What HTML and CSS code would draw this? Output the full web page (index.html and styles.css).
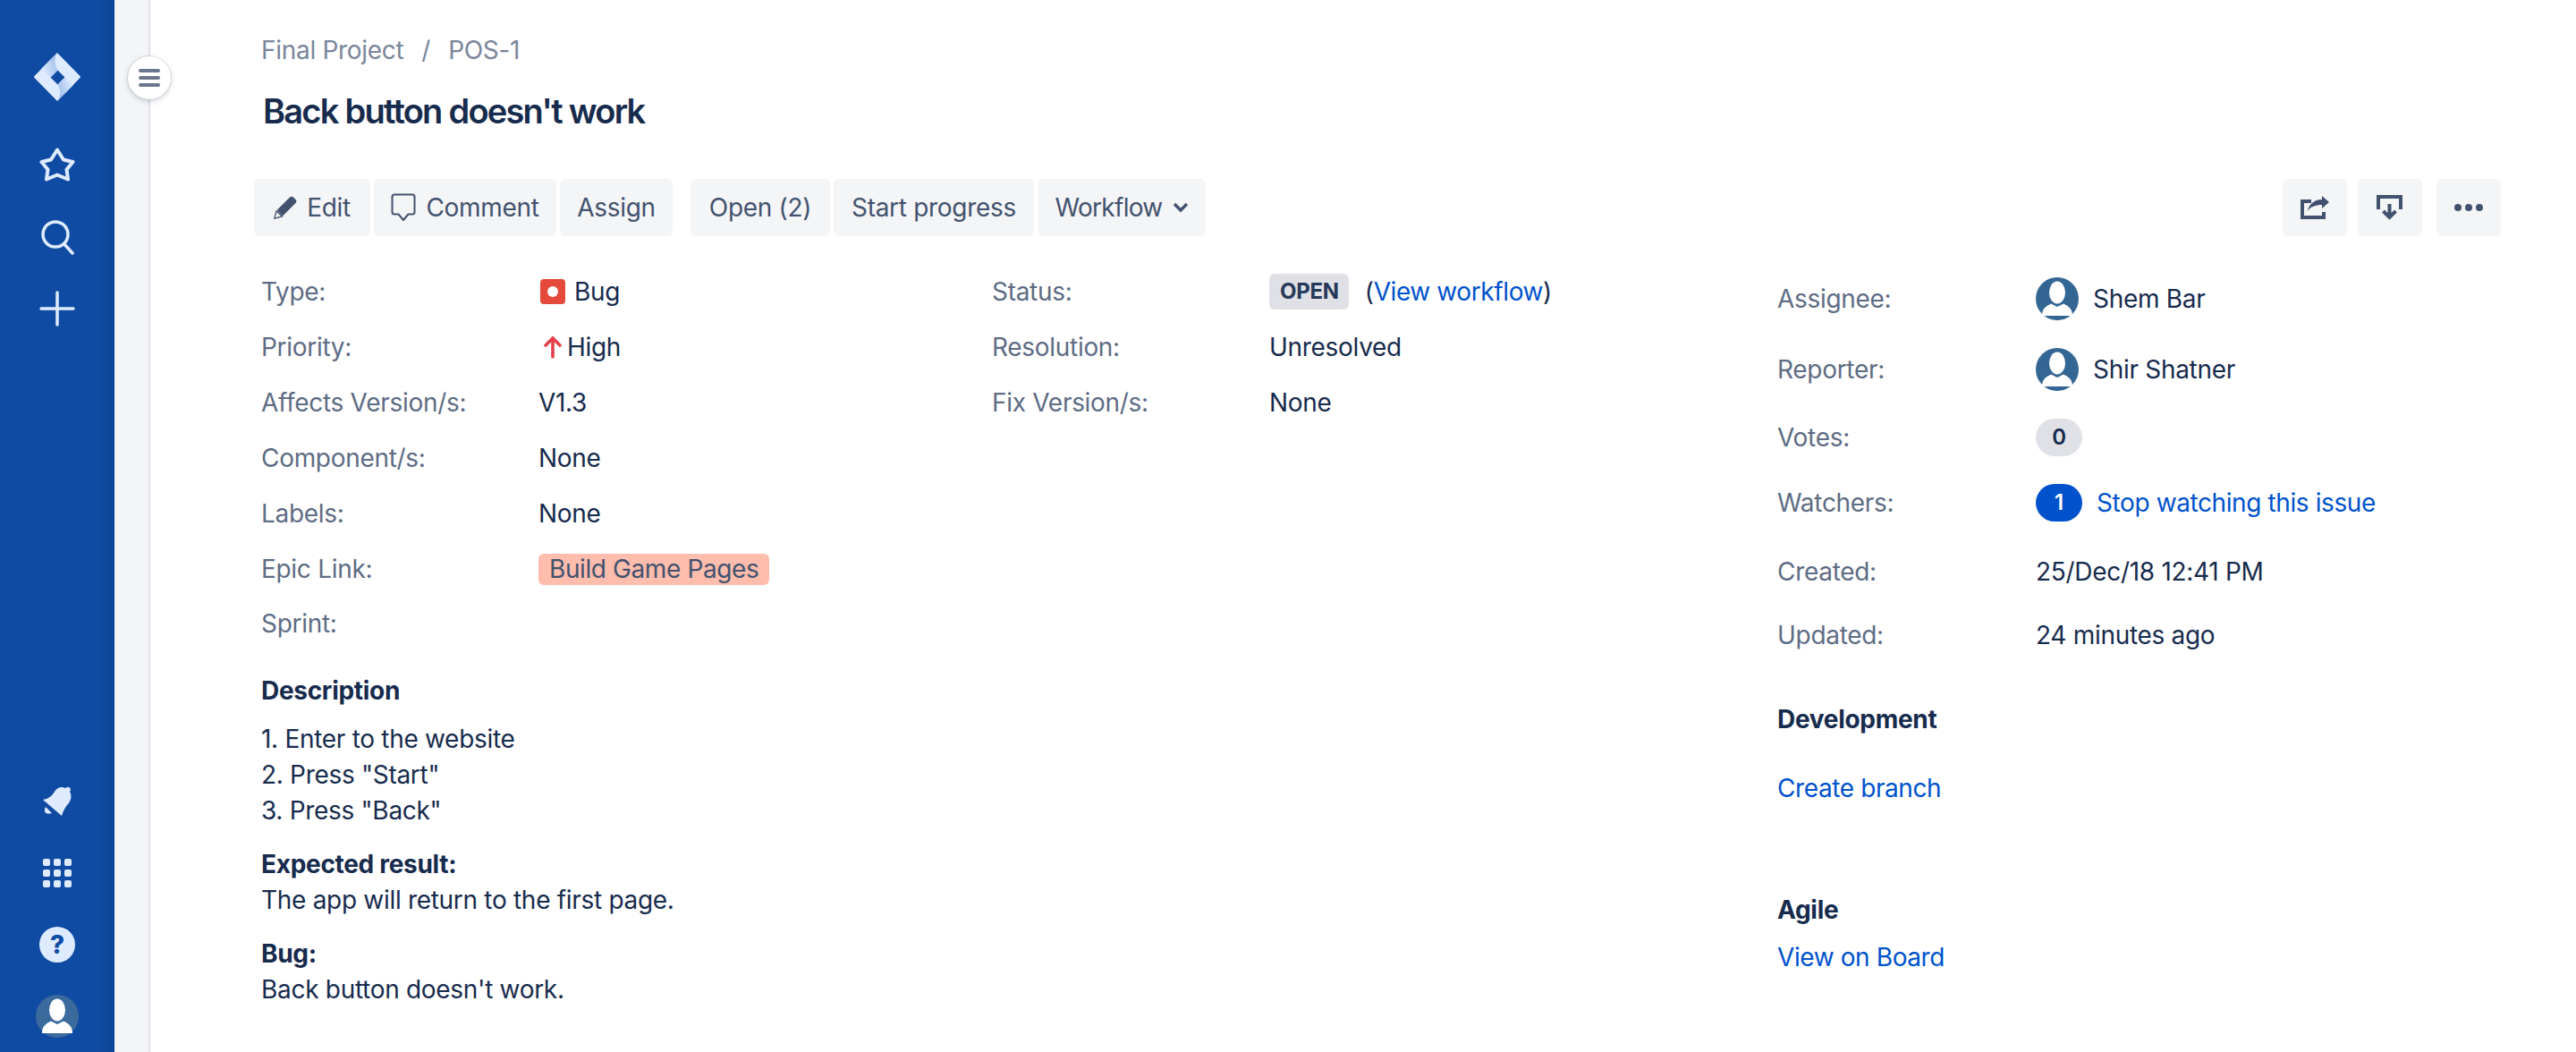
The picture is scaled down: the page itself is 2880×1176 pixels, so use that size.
FILE: index.html
```html
<!DOCTYPE html>
<html lang="en">
<head>
  <meta charset="UTF-8" />
  <title>POS-1 Back button doesn't work</title>
  <link rel="stylesheet" href="styles.css">
</head>
<body>
  <svg class="defs" width="0" height="0">
    <symbol id="avatar" viewBox="0 0 48 48">
      <circle cx="24" cy="24" r="24" fill="currentColor" />
      <ellipse cx="24" cy="17" rx="9" ry="12.5" fill="#fff" />
      <path d="M7 43C7 36 10 33 17 29.5L24 33L31 29.5C38 33 41 36 41 43Z" fill="#fff" />
    </symbol>
  </svg>

  <nav class="sidebar">
    <div class="nav-group">
      <svg class="nav-logo" width="52" height="54" viewBox="0 0 52 54">
        <defs>
          <linearGradient id="fold-top" gradientUnits="userSpaceOnUse" x1="8" y1="18" x2="26" y2="12">
            <stop offset="0" stop-color="#deebff" />
            <stop offset="1" stop-color="#a3c0ec" />
          </linearGradient>
          <linearGradient id="fold-bottom" gradientUnits="userSpaceOnUse" x1="27" y1="42" x2="44" y2="36">
            <stop offset="0" stop-color="#a3c0ec" />
            <stop offset="1" stop-color="#deebff" />
          </linearGradient>
        </defs>
        <path fill="#deebff" fill-rule="evenodd" d="M26 0L51.500 26Q52.500 27 51.500 28L26 54L0.500 28Q-0.500 27 0.500 26ZM26.500 19.500L18.500 27.500L26.500 35.500L34.500 27.500Z" />
        <path fill="url(#fold-top)" d="M26 0C22 7 23 14 26.500 19.500L18.500 27.500L8 18Z" />
        <path fill="url(#fold-bottom)" d="M26.500 35.500L34.500 27.500L44 36L26 54C31 47 30 41 26.500 35.500Z" />
      </svg>
      <svg class="nav-icon" width="40" height="40" viewBox="0 0 40 40">
        <path fill="none" stroke="#deebff" stroke-width="4" stroke-linejoin="round" d="M20 2.500L27 13.500L37.500 16L30.500 24.500L32 35.500L20 30.500L8 35.500L9.500 24.500L2.500 16L13 13.500Z" />
      </svg>
      <svg class="nav-icon" width="40" height="40" viewBox="0 0 40 40">
        <circle cx="18" cy="17" r="14" fill="none" stroke="#deebff" stroke-width="3.5" />
        <path d="M28 28L37 38" stroke="#deebff" stroke-width="3.5" stroke-linecap="round" />
      </svg>
      <svg class="nav-icon" width="40" height="40" viewBox="0 0 40 40">
        <path d="M20 2V38M2 20H38" stroke="#deebff" stroke-width="3.5" stroke-linecap="round" />
      </svg>
    </div>
    <div class="nav-group nav-bottom">
      <svg class="nav-icon nav-bell" width="34" height="34" viewBox="0 0 34 34">
        <path fill="#deebff" d="M1 15C7 14 11 11 14 6C17 1 22 0 26 2L28 1C30 0 32 2 32 4L31 6C34 11 32 17 28 21C25 25 23 29 22 33Z" />
        <path fill="#deebff" d="M4 23L11 30C8 31 4 31 3 28C3 26 3 25 4 23Z" />
      </svg>
      <svg class="nav-icon nav-apps" width="34" height="34" viewBox="0 0 34 34">
        <g fill="#deebff">
          <rect x="1" y="1" width="8" height="8" rx="2" /><rect x="13" y="1" width="8" height="8" rx="2" /><rect x="25" y="1" width="8" height="8" rx="2" />
          <rect x="1" y="13" width="8" height="8" rx="2" /><rect x="13" y="13" width="8" height="8" rx="2" /><rect x="25" y="13" width="8" height="8" rx="2" />
          <rect x="1" y="25" width="8" height="8" rx="2" /><rect x="13" y="25" width="8" height="8" rx="2" /><rect x="25" y="25" width="8" height="8" rx="2" />
        </g>
      </svg>
      <div class="nav-help">?</div>
      <svg class="nav-avatar" width="48" height="48"><use href="#avatar" /></svg>
    </div>
  </nav>

  <div class="gutter">
    <button class="gutter-toggle"><span></span><span></span><span></span></button>
  </div>

  <main class="content">
    <div class="breadcrumb">Final Project<span class="breadcrumb-sep">/</span>POS-1</div>
    <h1 class="title">Back button doesn't work</h1>

    <div class="toolbar">
      <div class="btn-group btn-group-edit">
        <button class="btn btn-icon-left">
          <svg width="26" height="26" viewBox="0 0 26 26"><path fill="#42526e" d="M18 1.500Q20 0 22 1.500L25 4.500Q26 6.500 24.500 8L10 22.500L3.500 16Z" /><path fill="none" stroke="#42526e" stroke-width="1.300" d="M3 17L9.500 23L0.800 25.200Z" /></svg>
          Edit
        </button>
        <button class="btn btn-icon-left">
          <svg width="28" height="32" viewBox="0 0 28 32"><path fill="none" stroke="#42526e" stroke-width="2" stroke-linejoin="round" d="M4 1.500H24Q26.500 1.500 26.500 4V21Q26.500 23.500 24 23.500H19.500L14 30L8.500 23.500H4Q1.500 23.500 1.500 21V4Q1.500 1.500 4 1.500Z" /></svg>
          Comment
        </button>
        <button class="btn">Assign</button>
      </div>
      <div class="btn-group btn-group-flow">
        <button class="btn">Open (2)</button>
        <button class="btn">Start progress</button>
        <button class="btn btn-workflow">
          Workflow
          <svg width="18" height="12" viewBox="0 0 18 12"><path fill="none" stroke="#42526e" stroke-width="3.400" d="M2 2L9 9L16 2" /></svg>
        </button>
      </div>
      <div class="toolbar-right">
        <button class="btn btn-square">
          <svg width="32" height="26" viewBox="0 0 32 26"><path fill="#42526e" d="M0 4H12V8H4V22H24V18H28V26H0Z" /><path fill="#42526e" d="M24 0L32 7L24 14V10C17 10 11 12 8 17C9 10 15 4 24 4Z" /></svg>
        </button>
        <button class="btn btn-square">
          <svg width="30" height="28" viewBox="0 0 30 28"><path fill="#42526e" d="M0 0H29V16H25V4H4V16H0Z" /><path fill="none" stroke="#42526e" stroke-width="4" d="M14.500 10V25M7.500 18L14.500 25L21.500 18" /></svg>
        </button>
        <button class="btn btn-square btn-more">
          <svg width="32" height="8" viewBox="0 0 32 8"><circle cx="4" cy="4" r="4" fill="#42526e" /><circle cx="16" cy="4" r="4" fill="#42526e" /><circle cx="28" cy="4" r="4" fill="#42526e" /></svg>
        </button>
      </div>
    </div>

    <div class="issue">
      <section class="issue-main">
        <div class="details">
          <div class="field-col">
            <div class="field"><span class="field-label">Type:</span><span class="field-value">
              <span class="bug-icon"></span>Bug</span></div>
            <div class="field"><span class="field-label">Priority:</span><span class="field-value">
              <svg class="priority-icon" width="20" height="26" viewBox="0 0 20 26"><path fill="none" stroke="#e5404a" stroke-width="3.600" stroke-linecap="round" d="M10 24V3M2 11L10 3L18 11" /></svg>High</span></div>
            <div class="field"><span class="field-label">Affects Version/s:</span><span class="field-value">V1.3</span></div>
            <div class="field"><span class="field-label">Component/s:</span><span class="field-value">None</span></div>
            <div class="field"><span class="field-label">Labels:</span><span class="field-value">None</span></div>
            <div class="field"><span class="field-label">Epic Link:</span><span class="field-value"><span class="epic-label">Build Game Pages</span></span></div>
            <div class="field field-sprint"><span class="field-label">Sprint:</span></div>
          </div>
          <div class="field-col">
            <div class="field"><span class="field-label">Status:</span><span class="field-value">
              <span class="lozenge">OPEN</span>(<a class="link" href="#">View workflow</a>)</span></div>
            <div class="field"><span class="field-label">Resolution:</span><span class="field-value">Unresolved</span></div>
            <div class="field"><span class="field-label">Fix Version/s:</span><span class="field-value">None</span></div>
          </div>
        </div>

        <div class="description">
          <h3 class="section-title">Description</h3>
          <p class="desc-steps">1. Enter to the website<br>2. Press "Start"<br>3. Press "Back"</p>
          <p class="desc-block"><strong>Expected result:</strong><br>The app will return to the first page.</p>
          <p class="desc-block"><strong>Bug:</strong><br>Back button doesn't work.</p>
        </div>
      </section>

      <aside class="issue-side">
        <div class="people">
          <div class="side-row"><span class="side-label">Assignee:</span><span class="side-value">
            <svg class="user-avatar" width="48" height="48"><use href="#avatar" /></svg>Shem Bar</span></div>
          <div class="side-row"><span class="side-label">Reporter:</span><span class="side-value">
            <svg class="user-avatar" width="48" height="48"><use href="#avatar" /></svg>Shir Shatner</span></div>
          <div class="side-row"><span class="side-label">Votes:</span><span class="side-value"><span class="count">0</span></span></div>
          <div class="side-row"><span class="side-label">Watchers:</span><span class="side-value">
            <span class="count count-active">1</span><a class="link" href="#">Stop watching this issue</a></span></div>
          <div class="side-row side-dates"><span class="side-label">Created:</span><span class="side-value">25/Dec/18 12:41 PM</span></div>
          <div class="side-row"><span class="side-label">Updated:</span><span class="side-value">24 minutes ago</span></div>
        </div>

        <h3 class="section-title side-dev">Development</h3>
        <a class="link side-link" href="#">Create branch</a>

        <h3 class="section-title side-agile">Agile</h3>
        <a class="link side-board" href="#">View on Board</a>
      </aside>
    </div>
  </main>
</body>
</html>
```

FILE: styles.css
```css
* {
  box-sizing: border-box;
}

html, body {
  height: 100%;
}

body {
  display: flex;
  height: 1176px;
  margin: 0;
  overflow: hidden;
  background: #fff;
  color: #172b4d;
  font-family: 'Inter', sans-serif;
  font-size: 28px;
  line-height: 40px;
  letter-spacing: -0.3px;
}

.defs {
  position: absolute;
}

.sidebar {
  display: flex;
  flex-direction: column;
  justify-content: space-between;
  width: 128px;
  padding: 59px 0 16px;
  background: linear-gradient(90deg, #0f4ba3 85%, #0c4595);
  color: #3b6a9c;
}

.nav-group {
  display: flex;
  flex-direction: column;
  align-items: center;
}

.nav-logo {
  margin-bottom: 52px;
}

.nav-icon {
  margin-bottom: 40px;
}

.nav-bell {
  margin-bottom: 46px;
}

.nav-apps {
  margin-bottom: 43px;
}

.nav-help {
  width: 40px;
  height: 40px;
  margin-bottom: 36px;
  border-radius: 50%;
  background: #deebff;
  color: #0f4ba3;
  font-size: 28px;
  font-weight: 800;
  line-height: 40px;
  text-align: center;
}

.gutter {
  position: relative;
  width: 40px;
  background: #f4f5f7;
  border-right: 2px solid #dfe1e6;
}

.gutter-toggle {
  position: absolute;
  top: 63px;
  left: 15px;
  display: flex;
  flex-direction: column;
  align-items: center;
  justify-content: center;
  gap: 4px;
  width: 48px;
  height: 48px;
  padding: 0;
  border: none;
  border-radius: 50%;
  background: #fff;
  box-shadow: 0 0 0 1px rgba(9, 30, 66, 0.08), 0 2px 6px rgba(9, 30, 66, 0.2);
}

.gutter-toggle span {
  width: 24px;
  height: 4px;
  border-radius: 2px;
  background: #6b778c;
}

.content {
  flex: 1;
  padding: 36px 84px 0 116px;
}

.breadcrumb {
  padding-left: 8px;
  color: #7a869a;
}

.breadcrumb-sep {
  margin: 0 20px;
}

.title {
  margin: 24px 0 52px;
  padding-left: 10px;
  color: #172b4d;
  font-size: 38px;
  font-weight: 600;
  line-height: 48px;
  letter-spacing: -1.75px;
}

.toolbar {
  display: flex;
  gap: 20px;
}

.btn-group {
  display: grid;
  gap: 4px;
}

.btn-group-edit {
  grid-template-columns: 130px 204px 126px;
}

.btn-group-flow {
  grid-template-columns: 156px 224px 188px;
}

.toolbar-right {
  display: flex;
  gap: 12px;
  margin-left: auto;
}

.btn {
  display: flex;
  align-items: center;
  justify-content: center;
  height: 64px;
  padding: 0;
  border: none;
  border-radius: 6px;
  background: #f4f5f7;
  color: #42526e;
  font-family: inherit;
  font-size: 28px;
  letter-spacing: -0.3px;
}

.btn-icon-left {
  gap: 11px;
}

.btn-workflow {
  gap: 11px;
  letter-spacing: -0.7px;
}

.btn-square {
  width: 72px;
}

.btn-more {
  margin-left: 4px;
}

.issue {
  display: flex;
  margin-top: 31px;
  padding-left: 8px;
}

.issue-main {
  width: 1695px;
}

.details {
  display: flex;
}

.field-col {
  width: 817px;
}

.field {
  display: flex;
  align-items: center;
  height: 62px;
}

.field-sprint {
  height: 60px;
}

.field-label {
  width: 310px;
  color: #5e6c84;
}

.field-value {
  display: flex;
  align-items: center;
}

.bug-icon {
  position: relative;
  display: block;
  width: 28px;
  height: 28px;
  margin: 0 10px 0 2px;
  border-radius: 4px;
  background: #e5493a;
}

.bug-icon::after {
  content: "";
  position: absolute;
  top: 8px;
  left: 8px;
  width: 12px;
  height: 12px;
  border-radius: 50%;
  background: #fff;
}

.priority-icon {
  margin: 0 6px 0 6px;
}

.epic-label {
  height: 35px;
  padding: 0 12px;
  border-radius: 6px;
  background: #ffbdad;
  color: #42526e;
  line-height: 35px;
  letter-spacing: -0.4px;
}

.lozenge {
  height: 40px;
  margin-right: 18px;
  padding: 0 11px 0 12px;
  border-radius: 6px;
  background: #dfe1e6;
  color: #253858;
  font-size: 24px;
  font-weight: 700;
  line-height: 40px;
}

.link {
  color: #0052cc;
  text-decoration: none;
  letter-spacing: -0.4px;
}

.section-title {
  margin: 0;
  font-size: 28px;
  font-weight: 700;
  line-height: 40px;
}

.description {
  margin-top: 25px;
}

.description p {
  margin: 0;
}

.desc-steps {
  padding-top: 14px;
}

.desc-block {
  padding-top: 20px;
}

.issue-side {
  padding-top: 15px;
}

.people {
  display: flex;
  flex-direction: column;
  gap: 31px;
}

.side-row {
  display: flex;
  align-items: center;
}

.side-dates {
  margin-top: 5px;
}

.side-label {
  width: 289px;
  color: #5e6c84;
}

.side-value {
  display: flex;
  align-items: center;
}

.user-avatar {
  margin-right: 16px;
  color: #346694;
}

.count {
  width: 52px;
  height: 42px;
  border-radius: 21px;
  background: #dfe1e6;
  font-size: 24px;
  font-weight: 600;
  line-height: 42px;
  text-align: center;
}

.count-active {
  margin-right: 16px;
  background: #0052cc;
  color: #fff;
}

.side-dev {
  margin-top: 54px;
}

.side-link,
.side-board {
  display: block;
}

.side-link {
  margin-top: 37px;
}

.side-agile {
  margin-top: 96px;
}

.side-board {
  margin-top: 13px;
}
```
